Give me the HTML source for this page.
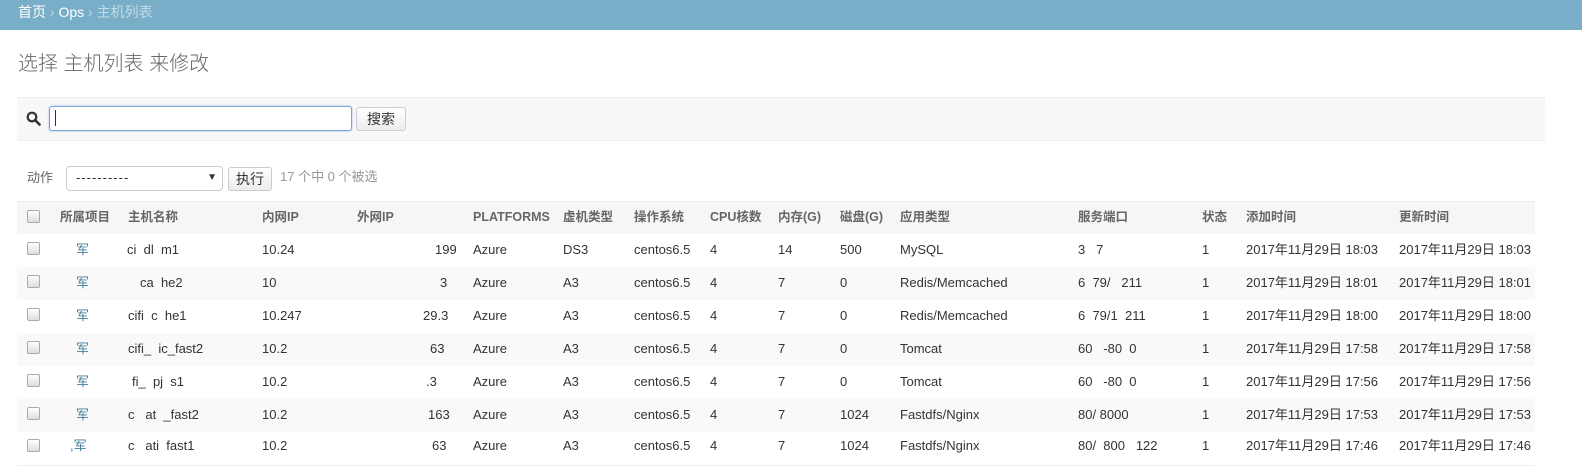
<!DOCTYPE html>
<html><head><meta charset="utf-8"><style>
body{margin:0;width:1582px;height:455px;overflow:hidden;background:#fff;font-family:"Liberation Sans","Noto Sans CJK SC",sans-serif;font-size:13px;color:#333;position:relative}
.hdr{position:absolute;left:0;top:0;width:1582px;height:30px;background:#79aec8}
.bc{position:absolute;left:18px;top:3px;font-size:14px;color:#fff;line-height:18px}
.bc .a{color:#fff}.bc .s{color:#c4dce8}
h1{position:absolute;left:18px;top:51px;margin:0;font-weight:300;font-size:20px;color:#666;line-height:26px}
.tool{position:absolute;left:17px;top:97px;width:1528px;height:42px;background:#f8f8f8;border-top:1px solid #eee;border-bottom:1px solid #eee}
.inp{position:absolute;left:49px;top:106px;width:301px;height:23px;border:1px solid #7fa3d9;border-radius:3px;background:#fff;box-shadow:0 0 2px #9bbbe8}
.caret{position:absolute;left:55px;top:110px;width:1px;height:16px;background:#333}
.btn{position:absolute;height:22px;border:1px solid #ccc;border-radius:3px;background:linear-gradient(#fff,#ececec);font-size:14px;line-height:22px;text-align:center;color:#333}
.sel{position:absolute;left:66px;top:166px;width:155px;height:23px;border:1px solid #ccc;border-radius:4px;background:#fff}
.row{position:absolute;left:17px;width:1518px;height:33px;border-bottom:1px solid #eee}
.c{position:absolute;white-space:nowrap;line-height:16px;height:16px}
.th{color:#666;font-weight:bold;font-size:12.5px}
.cb{position:absolute;left:27px;width:11px;height:11px;border:1px solid #aaa;border-radius:2px;background:linear-gradient(#fff,#ddd)}
</style></head><body>
<div class="hdr"><div class="bc"><span class="a">首页</span> <span class="s">›</span> <span class="a">Ops</span> <span class="s">›</span> <span class="s">主机列表</span></div></div>
<h1>选择 主机列表 来修改</h1>
<div class="tool"></div>
<svg style="position:absolute;left:26px;top:111px" width="15" height="15" viewBox="0 0 15 15"><circle cx="6" cy="6" r="4.3" fill="none" stroke="#333" stroke-width="2.2"/><path d="M9 9l4.5 4.5" stroke="#333" stroke-width="2.6" stroke-linecap="round"/></svg>
<div class="inp"></div><div class="caret"></div>
<div class="btn" style="left:356px;top:107px;width:48px">搜索</div>
<div class="c" style="left:27px;top:170px;color:#666;font-size:13px">动作</div>
<div class="sel"><span style="position:absolute;left:9px;top:3px;font-size:13px;letter-spacing:1px;line-height:16px">----------</span><span style="position:absolute;right:5px;top:5px;font-size:10px;line-height:12px">▼</span></div>
<div class="btn" style="left:228px;top:167px;width:42px">执行</div>
<div class="c" style="left:280px;top:169px;color:#999">17 个中 0 个被选</div>

<div class="row" style="top:201px;background:#f6f6f6;border-top:1px solid #eee;height:32px"></div>
<div class="cb" style="top:210px"></div>
<div class="c th" style="left:60px;top:209px">所属项目</div>
<div class="c th" style="left:128px;top:209px">主机名称</div>
<div class="c th" style="left:262px;top:209px">内网IP</div>
<div class="c th" style="left:357px;top:209px">外网IP</div>
<div class="c th" style="left:473px;top:209px">PLATFORMS</div>
<div class="c th" style="left:563px;top:209px">虚机类型</div>
<div class="c th" style="left:634px;top:209px">操作系统</div>
<div class="c th" style="left:710px;top:209px">CPU核数</div>
<div class="c th" style="left:778px;top:209px">内存(G)</div>
<div class="c th" style="left:840px;top:209px">磁盘(G)</div>
<div class="c th" style="left:900px;top:209px">应用类型</div>
<div class="c th" style="left:1078px;top:209px">服务端口</div>
<div class="c th" style="left:1202px;top:209px">状态</div>
<div class="c th" style="left:1246px;top:209px">添加时间</div>
<div class="c th" style="left:1399px;top:209px">更新时间</div>

<div class="row" style="top:234px;background:#fff"></div>
<div class="row" style="top:267px;background:#f9f9f9"></div>
<div class="row" style="top:300px;background:#fff"></div>
<div class="row" style="top:333px;background:#f9f9f9"></div>
<div class="row" style="top:366px;background:#fff"></div>
<div class="row" style="top:399px;background:#f9f9f9"></div>
<div class="row" style="top:432px;background:#fff"></div>

<div class="cb" style="top:242px"></div><div class="cb" style="top:275px"></div><div class="cb" style="top:308px"></div><div class="cb" style="top:341px"></div><div class="cb" style="top:374px"></div><div class="cb" style="top:407px"></div><div class="cb" style="top:439px"></div>

<div style="position:absolute;left:0;top:0">
<div class="c" style="left:76px;top:242px;color:#447e9b">军</div>
<div class="c" style="left:76px;top:275px;color:#447e9b">军</div>
<div class="c" style="left:76px;top:308px;color:#447e9b">军</div>
<div class="c" style="left:76px;top:341px;color:#447e9b">军</div>
<div class="c" style="left:76px;top:374px;color:#447e9b">军</div>
<div class="c" style="left:76px;top:407px;color:#447e9b">军</div>
<div class="c" style="left:70px;top:438px;color:#447e9b">,军</div>

<div class="c" style="left:127px;top:242px">ci&nbsp; dl&nbsp; m1</div>
<div class="c" style="left:140px;top:275px">ca&nbsp; he2</div>
<div class="c" style="left:128px;top:308px">cifi&nbsp; c&nbsp; he1</div>
<div class="c" style="left:128px;top:341px">cifi_&nbsp; ic_fast2</div>
<div class="c" style="left:132px;top:374px">fi_&nbsp; pj&nbsp; s1</div>
<div class="c" style="left:128px;top:407px">c&nbsp;&nbsp; at&nbsp; _fast2</div>
<div class="c" style="left:128px;top:438px">c&nbsp;&nbsp; ati&nbsp; fast1</div>

<div class="c" style="left:262px;top:242px">10.24</div>
<div class="c" style="left:262px;top:275px">10</div>
<div class="c" style="left:262px;top:308px">10.247</div>
<div class="c" style="left:262px;top:341px">10.2</div>
<div class="c" style="left:262px;top:374px">10.2</div>
<div class="c" style="left:262px;top:407px">10.2</div>
<div class="c" style="left:262px;top:438px">10.2</div>

<div class="c" style="left:435px;top:242px">199</div>
<div class="c" style="left:440px;top:275px">3</div>
<div class="c" style="left:423px;top:308px">29.3</div>
<div class="c" style="left:430px;top:341px">63</div>
<div class="c" style="left:426px;top:374px">.3</div>
<div class="c" style="left:428px;top:407px">163</div>
<div class="c" style="left:432px;top:438px">63</div>
</div>

<div id="rest"></div>
<script>
var rows=[["DS3","14","500","MySQL","3&nbsp;&nbsp; 7","18:03"],["A3","7","0","Redis/Memcached","6&nbsp; 79/&nbsp;&nbsp; 211","18:01"],["A3","7","0","Redis/Memcached","6&nbsp; 79/1&nbsp;&nbsp;211","18:00"],["A3","7","0","Tomcat","60&nbsp;&nbsp;&nbsp;-80&nbsp;&nbsp;0","17:58"],["A3","7","0","Tomcat","60&nbsp;&nbsp;&nbsp;-80&nbsp;&nbsp;0","17:56"],["A3","7","1024","Fastdfs/Nginx","80/&nbsp;8000","17:53"],["A3","7","1024","Fastdfs/Nginx","80/&nbsp;&nbsp;800&nbsp;&nbsp;&nbsp;122","17:46"]];
var h="";rows.forEach(function(r,i){var t=i<6?242+33*i:438;
function c(x,s){h+='<div class="c" style="left:'+x+'px;top:'+t+'px">'+s+'</div>';}
c(473,"Azure");c(563,r[0]);c(634,"centos6.5");c(710,"4");c(778,r[1]);c(840,r[2]);c(900,r[3]);c(1078,r[4]);c(1202,"1");c(1246,"2017年11月29日 "+r[5]);c(1399,"2017年11月29日 "+r[5]);});
document.getElementById("rest").innerHTML=h;
</script>
</body></html>
